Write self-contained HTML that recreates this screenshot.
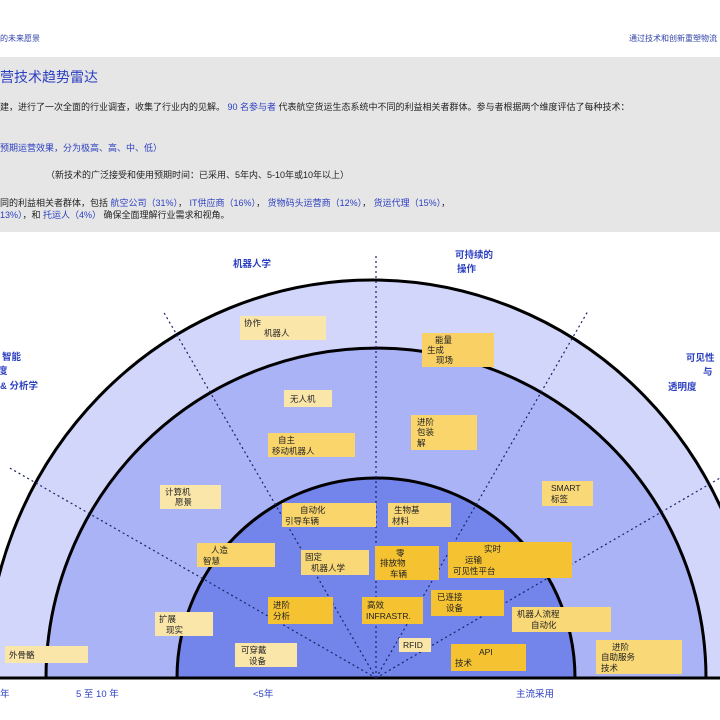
<!DOCTYPE html>
<html><head><meta charset="utf-8"><style>
body{margin:0;width:720px;height:720px;overflow:hidden;background:#fff;font-family:"Liberation Sans","Noto Sans CJK SC",sans-serif;position:relative}
.hd{position:absolute;top:33px;font-size:8px;color:#3344aa}
.band{position:absolute;left:0;top:57px;width:720px;height:175px;background:#e6e6e6}
.t{position:absolute;white-space:nowrap;color:#222;font-size:9px}
.b{color:#2b3fc0}
svg{position:absolute;left:0;top:0}
</style></head><body>
<div class="hd" style="left:0">的未来愿景</div>
<div class="hd" style="left:629px">通过技术和创新重塑物流</div>
<div class="band"></div>
<div class="t b" style="left:0;top:67px;font-size:14px">营技术趋势雷达</div>
<div class="t" style="left:0;top:100px">建，进行了一次全面的行业调查，收集了行业内的见解。 <span class="b">90 名参与者</span> 代表航空货运生态系统中不同的利益相关者群体。参与者根据两个维度评估了每种技术：</div>
<div class="t b" style="left:0;top:141px">预期运营效果，分为极高、高、中、低）</div>
<div class="t" style="left:46px;top:168px">（新技术的广泛接受和使用预期时间：已采用、5年内、5-10年或10年以上）</div>
<div class="t" style="left:0;top:196px">同的利益相关者群体，包括 <span class="b">航空公司（31%）</span>， <span class="b">IT供应商（16%）</span>， <span class="b">货物码头运营商（12%）</span>， <span class="b">货运代理（15%）</span>，</div>
<div class="t" style="left:0;top:208px"><span class="b">13%）</span>，和 <span class="b">托运人（4%）</span> 确保全面理解行业需求和视角。</div>
<svg width="720" height="720" font-family="Liberation Sans, Noto Sans CJK SC, sans-serif">
<path d="M-14 678 A386 398 0 0 1 758 678 Z" fill="#d2d6fb" stroke="#000" stroke-width="3"/>
<path d="M46 678 A330 330 0 0 1 706 678 Z" fill="#a9b3f5" stroke="#000" stroke-width="3"/>
<path d="M177 678 A199 200 0 0 1 575 678 Z" fill="#7385ea" stroke="#000" stroke-width="3"/>
<line x1="0" y1="678" x2="720" y2="678" stroke="#000" stroke-width="3"/>
<g stroke="#1a2266" stroke-width="1.2" stroke-dasharray="2,3" fill="none">
<line x1="376" y1="678" x2="376" y2="253"/>
<line x1="376" y1="678" x2="163" y2="311"/>
<line x1="376" y1="678" x2="588" y2="311"/>
<line x1="376" y1="678" x2="8" y2="467"/>
<line x1="376" y1="678" x2="720" y2="478"/>
</g>
<g font-size="9.5" fill="#2b3fc0" font-weight="bold">
<text x="233" y="267">机器人学</text>
<text x="455" y="258">可持续的</text><text x="457" y="272">操作</text>
<text x="2" y="360">智能</text><text x="-2" y="374">度</text><text x="0" y="389">&amp; 分析学</text>
<text x="686" y="361">可见性</text><text x="703" y="375">与</text><text x="668" y="390">透明度</text>
<text x="0" y="697" font-weight="normal">年</text>
<text x="76" y="697" font-weight="normal">5 至 10 年</text>
<text x="253" y="697" font-weight="normal">&lt;5年</text>
<text x="516" y="697" font-weight="normal">主流采用</text>
</g>
<g font-size="8.5" fill="#222">
<rect x="240" y="316" width="86" height="24" fill="#fbe6aa"/><text x="244" y="326">协作</text><text x="264" y="336">机器人</text>
<rect x="422" y="333" width="72" height="34" fill="#f8d064"/><text x="435" y="343">能量</text><text x="427" y="353">生成</text><text x="436" y="363">现场</text>
<rect x="284" y="390" width="48" height="17" fill="#fbe6aa"/><text x="290" y="402">无人机</text>
<rect x="268" y="433" width="87" height="24" fill="#f9d56c"/><text x="278" y="443">自主</text><text x="272" y="454">移动机器人</text>
<rect x="411" y="415" width="66" height="35" fill="#f9d56c"/><text x="417" y="425">进阶</text><text x="417" y="435">包装</text><text x="417" y="446">解</text>
<rect x="160" y="485" width="61" height="24" fill="#fbe6aa"/><text x="165" y="495">计算机</text><text x="175" y="505">愿景</text>
<rect x="542" y="481" width="51" height="25" fill="#f9d878"/><text x="551" y="491">SMART</text><text x="551" y="502">标签</text>
<rect x="282" y="503" width="94" height="24" fill="#f9d56c"/><text x="300" y="513">自动化</text><text x="285" y="524">引导车辆</text>
<rect x="388" y="503" width="63" height="24" fill="#f9d878"/><text x="394" y="513">生物基</text><text x="392" y="524">材料</text>
<rect x="197" y="543" width="78" height="24" fill="#f9d56c"/><text x="211" y="553">人造</text><text x="203" y="564">智慧</text>
<rect x="301" y="550" width="68" height="25" fill="#f9d878"/><text x="305" y="560">固定</text><text x="311" y="571">机器人学</text>
<rect x="375" y="546" width="64" height="34" fill="#f5c232"/><text x="396" y="556">零</text><text x="380" y="566">排放物</text><text x="390" y="577">车辆</text>
<rect x="448" y="542" width="124" height="36" fill="#f5c232"/><text x="484" y="552">实时</text><text x="465" y="563">运输</text><text x="453" y="574">可见性平台</text>
<rect x="268" y="597" width="65" height="27" fill="#f5c232"/><text x="273" y="608">进阶</text><text x="273" y="619">分析</text>
<rect x="362" y="597" width="61" height="27" fill="#f5c232"/><text x="367" y="608">高效</text><text x="366" y="619">INFRASTR.</text>
<rect x="431" y="590" width="73" height="26" fill="#f5c232"/><text x="437" y="600">已连接</text><text x="446" y="611">设备</text>
<rect x="512" y="607" width="99" height="25" fill="#f9d878"/><text x="517" y="617">机器人流程</text><text x="531" y="628">自动化</text>
<rect x="155" y="612" width="58" height="24" fill="#fbe6aa"/><text x="159" y="622">扩展</text><text x="166" y="633">现实</text>
<rect x="5" y="646" width="83" height="17" fill="#fbe6aa"/><text x="9" y="658">外骨骼</text>
<rect x="235" y="643" width="62" height="24" fill="#fbe6aa"/><text x="241" y="653">可穿戴</text><text x="249" y="664">设备</text>
<rect x="399" y="638" width="32" height="14" fill="#fbe6aa"/><text x="403" y="648">RFID</text>
<rect x="451" y="644" width="75" height="27" fill="#f5c232"/><text x="479" y="655">API</text><text x="455" y="666">技术</text>
<rect x="596" y="640" width="86" height="34" fill="#f9d878"/><text x="612" y="650">进阶</text><text x="601" y="660">自助服务</text><text x="601" y="671">技术</text>
</g>
</svg>
</body></html>
